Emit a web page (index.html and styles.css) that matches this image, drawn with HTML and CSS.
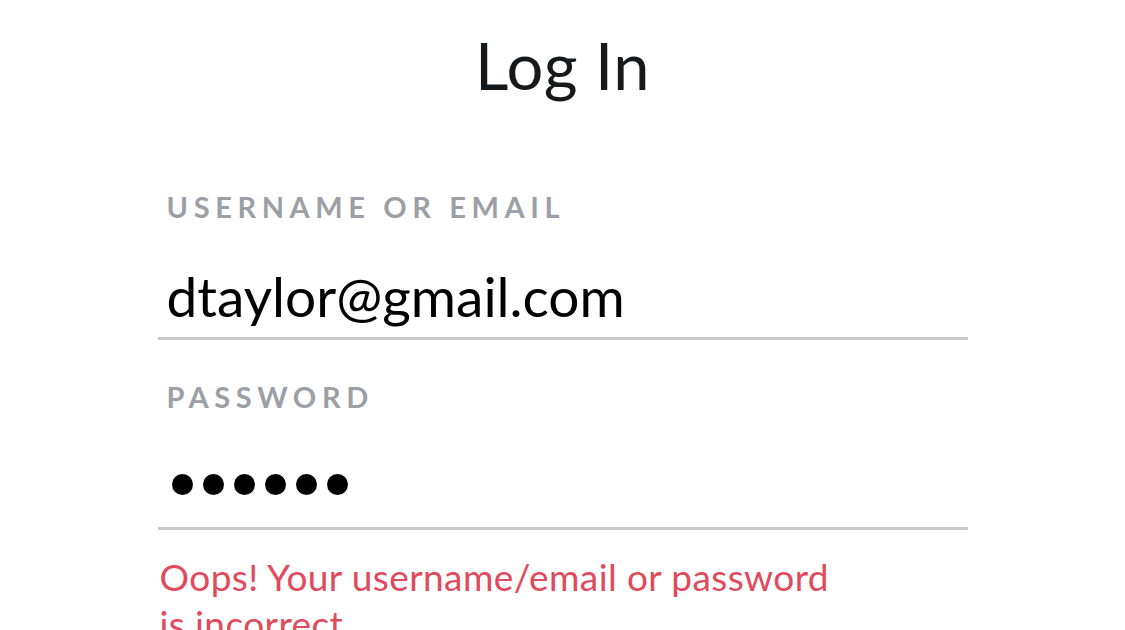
FILE: index.html
```html
<!DOCTYPE html>
<html lang="en">
<head>
    <meta charset="UTF-8">
    <meta name="viewport" content="width=device-width, initial-scale=1.0">
    <title>Log In</title>
    <link rel="stylesheet" href="styles.css">
</head>
<body>
    <div class="login">
        <h1>Log In</h1>

        <form class="login-form">
            <!-- Username -->
            <div class="field">
                <label class="field-label" for="username">Username or Email</label>
                <div class="field-input" id="username">dtaylor@gmail.com</div>
            </div>

            <!-- Password -->
            <div class="field">
                <label class="field-label" for="password">Password</label>
                <div class="password-dots" id="password">
                    <span class="dot"></span>
                    <span class="dot"></span>
                    <span class="dot"></span>
                    <span class="dot"></span>
                    <span class="dot"></span>
                    <span class="dot"></span>
                </div>
            </div>

            <p class="error">Oops! Your username/email or password is incorrect</p>
        </form>
    </div>
</body>
</html>
```

FILE: styles.css
```css
* {
    margin: 0;
    padding: 0;
    box-sizing: border-box;
}
body {
    background: #fff;
    font-family: 'Lato', 'Open Sans', sans-serif;
    color: #16191c;
    overflow: hidden;
}
.login {
    padding-top: 33px;
}
h1 {
    font-size: 65px;
    font-weight: 400;
    line-height: 1;
    letter-spacing: 0.5px;
    text-align: center;
    color: #16191c;
}
.login-form {
    width: 810px;
    margin: 94px auto 0;
}
.field {
    border-bottom: 3px solid #cacaca;
}
.field + .field {
    margin-top: 42px;
}
.field-label {
    display: block;
    padding-left: 9px;
    font-size: 29px;
    line-height: 1;
    font-weight: 700;
    letter-spacing: 5.6px;
    text-transform: uppercase;
    color: #9c9fa6;
}
.field-input {
    padding: 48px 0 13px 9px;
    font-size: 55px;
    line-height: 1;
    color: #000;
}
.password-dots {
    display: flex;
    gap: 10px;
    padding: 63px 0 32px 14px;
}
.dot {
    width: 21px;
    height: 21px;
    border-radius: 50%;
    background: #000;
}
.error {
    max-width: 690px;
    margin-top: 23px;
    padding-left: 2px;
    font-size: 37px;
    line-height: 47px;
    letter-spacing: 0.4px;
    color: #e04a5c;
}
```
